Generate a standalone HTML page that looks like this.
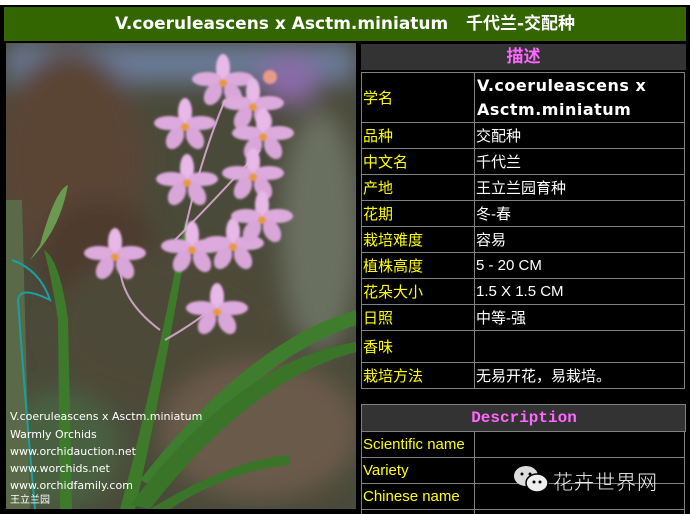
<!DOCTYPE html>
<html style="width:690px;height:514px;overflow:hidden"><head><meta charset="utf-8"><style>
*{margin:0;padding:0;box-sizing:border-box}
body{width:690px;height:514px;background:#000;position:relative;overflow:hidden;font-family:"Liberation Sans","Noto Sans CJK SC",sans-serif}
.a{position:absolute}
.top{left:0;top:0;width:690px;height:5px;background:#fff}
.bar{left:4px;top:7px;width:682px;height:34px;background:#336600;color:#fff;text-align:center;font:bold 17px/34px "Comic Sans MS","DejaVu Sans","Noto Sans CJK SC",sans-serif;}
.hd{background:#333;text-align:center;color:#f6f;font-weight:bold}
.c{border:1px solid #808080;position:absolute;color:#fff;font-size:15px;display:flex;align-items:center;padding-left:1px;white-space:nowrap}
.y{color:#ff0}
</style></head><body>
<div class="a top"></div>
<div class="a bar">V.coeruleascens x Asctm.miniatum &nbsp; 千代兰-交配种</div>
<svg class="a" style="left:6px;top:43px" width="350" height="466" viewBox="6 43 350 466">
<defs><filter id="b"><feGaussianBlur stdDeviation="12"/></filter><filter id="b2"><feGaussianBlur stdDeviation="1"/></filter>
<g id="f"><ellipse cx="0" cy="-15" rx="7" ry="14" fill="#e8b8e8"/><ellipse cx="-16" cy="-4" rx="15" ry="7" fill="#dcaadc"/><ellipse cx="16" cy="-4" rx="15" ry="7" fill="#dcaadc"/><ellipse cx="-10" cy="11" rx="8" ry="12" transform="rotate(30 -10 11)" fill="#d9a6d9"/><ellipse cx="10" cy="11" rx="8" ry="12" transform="rotate(-30 10 11)" fill="#d9a6d9"/><circle r="4" fill="#e89a30"/></g></defs>
<rect x="6" y="43" width="350" height="466" fill="#4a4a3a"/>
<g filter="url(#b)">
<rect x="6" y="43" width="350" height="40" fill="#6a7a98"/>
<ellipse cx="70" cy="160" rx="75" ry="110" fill="#5a4536"/>
<ellipse cx="100" cy="260" rx="60" ry="60" fill="#4e3b2d"/>
<ellipse cx="290" cy="80" rx="30" ry="25" fill="#8a6aa8"/>
<ellipse cx="320" cy="230" rx="40" ry="120" fill="#6a7060"/>
<ellipse cx="170" cy="330" rx="120" ry="80" fill="#4d4a38"/>
<ellipse cx="260" cy="430" rx="100" ry="70" fill="#6a5a48"/>
<ellipse cx="60" cy="450" rx="60" ry="60" fill="#4a6040"/>
</g>
<path d="M6 200 L22 200 L30 509 L6 509Z" fill="#5a6a48"/>
<path d="M40 245 Q55 190 68 185 Q60 230 30 260Z" fill="#6a9a50"/>
<path d="M44 250 Q60 260 68 320 L72 509 L60 509 L58 320 Q52 280 44 250Z" fill="#3e7a2c"/>
<path d="M120 509 Q150 400 185 220 L190 225 Q160 400 135 509Z" fill="#3d7a2a"/>
<path d="M140 480 Q250 340 356 310 L356 325 Q250 360 160 490Z" fill="#3e7d2e"/>
<path d="M130 505 Q240 360 356 342 L356 352 Q250 380 150 509Z" fill="#3a7428"/>
<path d="M150 509 Q230 460 290 455 L290 465 Q230 470 170 509Z" fill="#3a7428"/>
<path d="M12 260 Q40 270 50 300 Q20 285 18 300 Q25 400 35 509" stroke="#1aa0a0" stroke-width="2" fill="none"/>
<g stroke="#caa0c0" stroke-width="2" fill="none"><path d="M185 230 Q200 160 225 100"/><path d="M175 240 Q215 200 260 150"/><path d="M160 330 Q120 300 120 265"/><path d="M165 340 Q200 320 215 305"/></g>
<g filter="url(#b2)">
<use href="#f" x="223" y="83"/><use href="#f" x="253" y="107"/><use href="#f" x="263" y="137"/><use href="#f" x="185" y="127"/><use href="#f" x="187" y="183"/><use href="#f" x="253" y="177"/><use href="#f" x="115" y="257"/><use href="#f" x="192" y="250"/><use href="#f" x="233" y="247"/><use href="#f" x="262" y="220"/><use href="#f" x="217" y="312"/>
<circle cx="270" cy="77" r="7" fill="#e89a8a"/>
</g>
<g fill="#fff" font-family="'Comic Sans MS','DejaVu Sans',sans-serif" font-size="11">
<text x="10" y="420">V.coeruleascens x Asctm.miniatum</text>
<text x="10" y="438">Warmly Orchids</text>
<text x="10" y="455">www.orchidauction.net</text>
<text x="10" y="472">www.worchids.net</text>
<text x="10" y="489">www.orchidfamily.com</text>
<text x="10" y="503" font-family="'Noto Sans CJK SC',sans-serif" font-size="10">王立兰园</text>
</g>
</svg>
<div class="a hd" style="left:361px;top:44px;width:325px;height:26px;font-size:17px;line-height:26px">描述</div>
<div class="c y" style="left:361px;top:72px;width:114px;height:51px">学名</div>
<div class="c" style="left:474px;top:72px;width:211px;height:51px;font:bold 16px/24px 'Comic Sans MS','DejaVu Sans',sans-serif;white-space:normal;letter-spacing:.5px;padding-left:2px">V.coeruleascens x Asctm.miniatum</div>
<div class="c y" style="left:361px;top:122px;width:114px;height:27px">品种</div><div class="c" style="left:474px;top:122px;width:211px;height:27px">交配种</div>
<div class="c y" style="left:361px;top:148px;width:114px;height:27px">中文名</div><div class="c" style="left:474px;top:148px;width:211px;height:27px">千代兰</div>
<div class="c y" style="left:361px;top:174px;width:114px;height:27px">产地</div><div class="c" style="left:474px;top:174px;width:211px;height:27px">王立兰园育种</div>
<div class="c y" style="left:361px;top:200px;width:114px;height:27px">花期</div><div class="c" style="left:474px;top:200px;width:211px;height:27px">冬-春</div>
<div class="c y" style="left:361px;top:226px;width:114px;height:27px">栽培难度</div><div class="c" style="left:474px;top:226px;width:211px;height:27px">容易</div>
<div class="c y" style="left:361px;top:252px;width:114px;height:27px">植株高度</div><div class="c" style="left:474px;top:252px;width:211px;height:27px">5 - 20 CM</div>
<div class="c y" style="left:361px;top:278px;width:114px;height:27px">花朵大小</div><div class="c" style="left:474px;top:278px;width:211px;height:27px">1.5 X 1.5 CM</div>
<div class="c y" style="left:361px;top:304px;width:114px;height:27px">日照</div><div class="c" style="left:474px;top:304px;width:211px;height:27px">中等-强</div>
<div class="c y" style="left:361px;top:330px;width:114px;height:33px">香味</div><div class="c" style="left:474px;top:330px;width:211px;height:33px"></div>
<div class="c y" style="left:361px;top:362px;width:114px;height:27px">栽培方法</div><div class="c" style="left:474px;top:362px;width:211px;height:27px">无易开花，易栽培。</div>
<div class="c hd" style="left:361px;top:404px;width:325px;height:28px;justify-content:center;font:bold 16px 'Liberation Mono',monospace;color:#f6f">Description</div>
<div class="c y" style="left:361px;top:431px;width:114px;height:27px">Scientific name</div><div class="c" style="left:474px;top:431px;width:211px;height:27px"></div>
<div class="c y" style="left:361px;top:457px;width:114px;height:27px">Variety</div><div class="c" style="left:474px;top:457px;width:211px;height:27px"></div>
<div class="c y" style="left:361px;top:483px;width:114px;height:27px">Chinese name</div><div class="c" style="left:474px;top:483px;width:211px;height:27px"></div>
<div class="c" style="left:361px;top:509px;width:114px;height:5px;border-bottom:none"></div><div class="c" style="left:474px;top:509px;width:211px;height:5px;border-bottom:none"></div>
<svg class="a" style="left:512px;top:465px" width="38" height="28"><ellipse cx="14" cy="11" rx="12" ry="10" fill="#ddd"/><ellipse cx="25" cy="18" rx="11" ry="9" fill="#eee" stroke="#000" stroke-width="1.5"/><circle cx="22" cy="17" r="1.5" fill="#000"/><circle cx="28" cy="17" r="1.5" fill="#000"/><circle cx="10" cy="9" r="1.5" fill="#000"/><circle cx="18" cy="9" r="1.5" fill="#000"/></svg>
<div class="a" style="left:553px;top:466px;color:#eee;font:300 20px 'Noto Sans CJK SC',sans-serif;letter-spacing:1px">花卉世界网</div>
</body></html>
